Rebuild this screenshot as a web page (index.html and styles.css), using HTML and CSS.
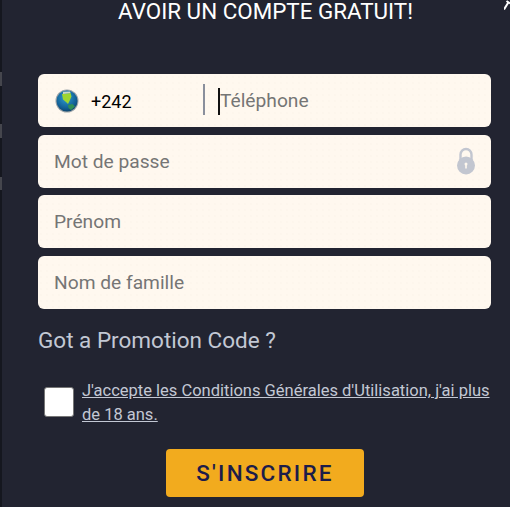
FILE: index.html
```html
<!DOCTYPE html>
<html lang="fr">
<head>
<meta charset="utf-8">
<title>Inscription</title>
<link rel="stylesheet" href="styles.css">
</head>
<body>
<main class="panel">
  <svg class="close" viewBox="0 0 6 11" aria-hidden="true"><path d="M0 9.5 L4 3 M2.5 1 L6 3.5" fill="none" stroke="#fff" stroke-width="2"/></svg>
  <h1 class="title">AVOIR UN COMPTE GRATUIT!</h1>
  <form class="form">
    <div class="field phone">
      <svg class="globe" viewBox="0 0 24 24" aria-hidden="true">
        <defs>
          <radialGradient id="sea" cx="45%" cy="35%" r="70%">
            <stop offset="0" stop-color="#2f9fd0"/>
            <stop offset="0.7" stop-color="#125f96"/>
            <stop offset="1" stop-color="#0d3f63"/>
          </radialGradient>
        </defs>
        <circle cx="12" cy="12" r="11.5" fill="#9aa3a8"/>
        <circle cx="12" cy="12" r="10.5" fill="url(#sea)"/>
        <path d="M7 5 L15.5 4 L16.5 7.5 L14.5 12 L13 15 L11 13 L8 10.5 Z" fill="#9ed62f"/>
        <path d="M13 16 L17.5 15 L20 17.5 L16 21 L13.5 19 Z" fill="#2f8f55"/>
        <path d="M8 2.8 L15 2.4 L15.5 4 L8 5 Z" fill="#cfd8c8"/>
      </svg>
      <span class="code">+242</span>
      <span class="divider"></span>
      <span class="caret"></span>
      <span class="hint">Téléphone</span>
    </div>
    <div class="field">
      <span class="hint">Mot de passe</span>
      <svg class="lock" viewBox="0 0 18 28" aria-hidden="true">
        <path d="M3.5 14 V7.5 a5.5 5.5 0 0 1 11 0 V14" fill="none" stroke="#c2c6d0" stroke-width="2.4"/>
        <circle cx="9" cy="18.5" r="9" fill="#c2c6d0"/>
        <circle cx="9" cy="17" r="1.5" fill="#fff8ee"/>
        <rect x="8.2" y="17" width="1.6" height="4.5" fill="#fff8ee"/>
      </svg>
    </div>
    <div class="field"><span class="hint">Prénom</span></div>
    <div class="field"><span class="hint">Nom de famille</span></div>
    <p class="promo">Got a Promotion Code ?</p>
    <div class="terms">
      <span class="box"></span>
      <a class="terms-link" href="#">J'accepte les Conditions Générales d'Utilisation, j'ai plus de 18 ans.</a>
    </div>
    <button class="submit" type="button">S'INSCRIRE</button>
  </form>
</main>
</body>
</html>
```
FILE: styles.css
```css
* { box-sizing: border-box; }
html, body { margin: 0; height: 100%; }
body {
  width: 510px;
  height: 507px;
  overflow: hidden;
  background: #222431;
  font-family: Roboto, "Liberation Sans", sans-serif;
}
.panel {
  position: relative;
  height: 507px;
  padding: 0 19px 0 38px;
  background:
    linear-gradient(#15171f 0 72px, #45464d 72px 86px, #15171f 86px 124px, #45464d 124px 138px, #15171f 138px 177px, #45464d 177px 190px, #15171f 190px) left top / 2px 100% no-repeat,
    #222431;
}
.close {
  position: absolute;
  top: 0;
  right: 0;
  width: 6px;
  height: 11px;
}
.title {
  margin: 0;
  padding-left: 2px;
  height: 74px;
  text-align: center;
  font-size: 22.4px;
  font-weight: 400;
  line-height: 23px;
  color: #fff;
}
.form { display: flex; flex-direction: column; }
.field {
  display: flex;
  align-items: center;
  height: 53px;
  margin-bottom: 8px;
  padding: 0 15px 1px 16px;
  border-radius: 6px;
  background-color: #fff8ef;
  background-image: radial-gradient(#faf3e9 0.6px, transparent 0.8px);
  background-size: 6px 6px;
  font-size: 19.2px;
}
.field:nth-child(2) { margin-bottom: 7px; }
.phone { padding-left: 17px; padding-bottom: 0; }
.hint { color: #757575; }
.globe { width: 24px; height: 24px; flex: none; }
.code {
  width: 112px;
  margin: 2px 0 0 12px;
  font-size: 18px;
  color: #000;
}
.divider {
  width: 2px;
  height: 31px;
  margin-top: -3px;
  background: #8a8f9c;
}
.caret {
  width: 2px;
  height: 27px;
  margin: 0 0 -1px 13px;
  background: #111;
}
.lock {
  width: 18px;
  height: 28px;
  margin-left: auto;
  margin-right: 1px;
}
.promo {
  margin: 7px 0 0 0;
  font-size: 22.5px;
  line-height: 32px;
  color: #c3c8d4;
}
.terms {
  display: flex;
  align-items: center;
  gap: 8px;
  margin: 23px 0 0 6px;
}
.box {
  width: 30px;
  height: 30px;
  margin-top: -2px;
  flex: none;
  border: 1px solid #767676;
  border-radius: 3px;
  background: #fff;
}
.terms-link {
  font-size: 16.5px;
  line-height: 24px;
  color: #c3c8d4;
  text-decoration: underline;
}
.submit {
  align-self: flex-start;
  width: 198px;
  height: 48px;
  margin: 22px 0 0 128px;
  border: 0;
  border-radius: 4px;
  background: #f2ab1e;
  color: #1c1c4a;
  font-family: inherit;
  font-size: 22.5px;
  font-weight: 500;
  letter-spacing: 2.2px;
}
```
